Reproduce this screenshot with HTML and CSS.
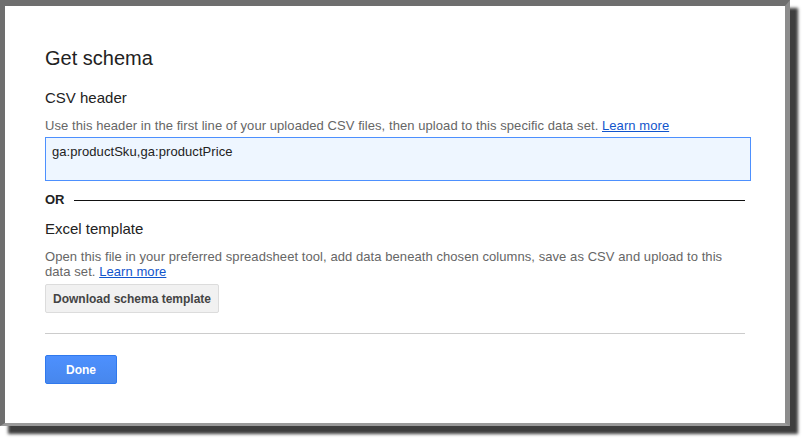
FILE: index.html
```html
<!DOCTYPE html>
<html>
<head>
<meta charset="utf-8">
<link rel="stylesheet" href="styles.css">
</head>
<body>
<div class="page">
  <div class="frame">
    <div class="dialog">
      <h1 class="title">Get schema</h1>
      <h2 class="section-title">CSV header</h2>
      <p class="desc">Use this header in the first line of your uploaded CSV files, then upload to this specific data set. <a class="link" href="#">Learn more</a></p>
      <div class="header-box">ga:productSku,ga:productPrice</div>
      <div class="or-row"><span class="or-label">OR</span><span class="or-line"></span></div>
      <h2 class="section-title">Excel template</h2>
      <p class="desc">Open this file in your preferred spreadsheet tool, add data beneath chosen columns, save as CSV and upload to this data set. <a class="link" href="#">Learn more</a></p>
      <button class="btn btn-default" type="button">Download schema template</button>
      <div class="divider"></div>
      <button class="btn btn-primary" type="button">Done</button>
    </div>
  </div>
</div>
</body>
</html>
```
FILE: styles.css
```css
html, body {
  margin: 0;
  padding: 0;
  background: #ffffff;
}
body {
  font-family: "Liberation Sans", Arial, sans-serif;
  color: #222222;
}
.page {
  width: 804px;
  height: 439px;
  overflow: hidden;
}
.frame {
  box-sizing: border-box;
  width: 790px;
  height: 426px;
  background: #ffffff;
  border-top: 6px solid #6e6e6e;
  border-left: 5px solid #6e6e6e;
  border-right: 5px solid #8c8c8c;
  border-bottom: 3px solid #9a9a9a;
  box-shadow: 8px 8px 3px #3e3e3e;
}
.dialog {
  padding: 38px 40px 0 40px;
  display: flex;
  flex-direction: column;
  align-items: flex-start;
}
.title {
  margin: 0;
  font-size: 20px;
  font-weight: normal;
  line-height: 28px;
  color: #222222;
}
.section-title {
  margin: 0;
  font-size: 15px;
  font-weight: normal;
  line-height: 20px;
  color: #222222;
}
.dialog > .title + .section-title {
  margin-top: 16px;
}
.desc {
  margin: 10px 0 0 0;
  font-size: 13px;
  letter-spacing: 0.07px;
  line-height: 15px;
  color: #666666;
  width: 700px;
}
.link {
  color: #1155cc;
  text-decoration: underline;
}
.header-box {
  box-sizing: border-box;
  margin-top: 4px;
  width: 706px;
  height: 44px;
  padding: 6px 6px;
  font-size: 13px;
  letter-spacing: 0.07px;
  line-height: 16px;
  color: #222222;
  background: #eef6ff;
  border: 1px solid #4d90fe;
}
.or-row {
  margin-top: 11px;
  width: 700px;
  display: flex;
  align-items: center;
  gap: 9px;
}
.or-label {
  font-size: 13px;
  font-weight: bold;
  line-height: 16px;
  color: #222222;
}
.or-line {
  flex: 1;
  height: 1px;
  background: #111111;
}
.or-row + .section-title {
  margin-top: 11px;
}
.btn {
  box-sizing: border-box;
  height: 29px;
  padding: 0 7px;
  font-family: "Liberation Sans", Arial, sans-serif;
  font-size: 12px;
  font-weight: bold;
  border-radius: 2px;
  cursor: default;
}
.btn-default {
  margin-top: 5px;
  color: #444444;
  background: #f1f1f1;
  border: 1px solid #dcdcdc;
}
.divider {
  margin-top: 20px;
  width: 700px;
  height: 1px;
  background: #cccccc;
}
.btn-primary {
  margin-top: 21px;
  width: 72px;
  color: #ffffff;
  background: linear-gradient(#4d90fe, #4787ed);
  border: 1px solid #3079ed;
}
```
